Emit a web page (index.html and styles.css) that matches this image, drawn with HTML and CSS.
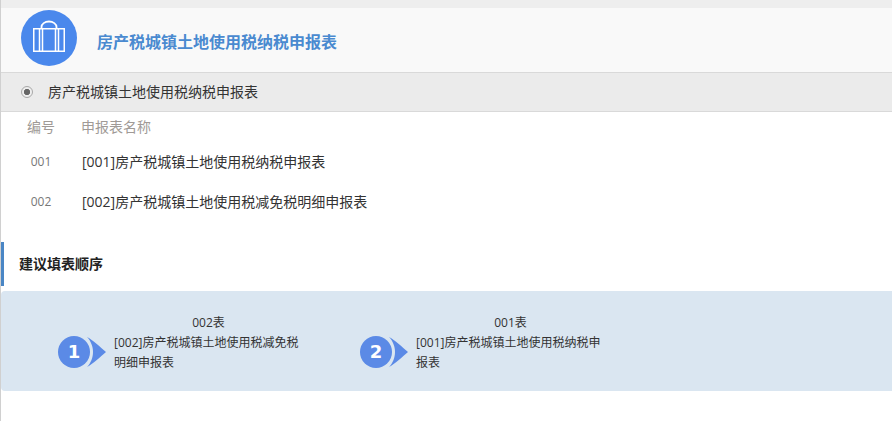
FILE: index.html
```html
<!DOCTYPE html>
<html lang="zh">
<head>
<meta charset="utf-8">
<title>房产税城镇土地使用税纳税申报表</title>
<link rel="stylesheet" href="styles.css">
</head>
<body>
<div class="page">
  <header class="head">
    <span class="logo">
      <svg width="56" height="56" viewBox="0 0 56 56"><circle cx="28" cy="28" r="28" fill="#4a88ec"/><g fill="none" stroke="#fff" stroke-width="1.5"><rect x="12.750" y="18.750" width="30.500" height="22.500"/><path d="M18.500 41V19M21.500 41V19M34.500 41V19M37.500 41V19"/><path d="M20.500 18.500V17a7.500 5.500 0 0 1 15 0V18.500" stroke-width="1.800"/></g></svg>
    </span>
    <h1 class="title">房产税城镇土地使用税纳税申报表</h1>
  </header>
  <div class="choice">
    <span class="radio"></span>
    <span class="choice-label">房产税城镇土地使用税纳税申报表</span>
  </div>
  <table class="forms">
    <thead><tr><th class="num">编号</th><th>申报表名称</th></tr></thead>
    <tbody>
      <tr><td class="num">001</td><td class="name">[001]房产税城镇土地使用税纳税申报表</td></tr>
      <tr><td class="num">002</td><td class="name">[002]房产税城镇土地使用税减免税明细申报表</td></tr>
    </tbody>
  </table>
  <h2 class="section">建议填表顺序</h2>
  <div class="panel">
    <div class="step">
      <span class="badge">
        <svg width="50" height="32" viewBox="0 0 50 32"><path d="M29 1C33 5 35 11 35 16C35 21 33 27 29 31C35 28 42 21 48 16C42 11 35 4 29 1Z" fill="#5b8ae6"/></svg>
        <span class="badge-num">1</span>
      </span>
      <div class="step-text"><div class="step-title">002表</div><div>[002]房产税城镇土地使用税减免税明细申报表</div></div>
    </div>
    <div class="step">
      <span class="badge">
        <svg width="50" height="32" viewBox="0 0 50 32"><path d="M29 1C33 5 35 11 35 16C35 21 33 27 29 31C35 28 42 21 48 16C42 11 35 4 29 1Z" fill="#5b8ae6"/></svg>
        <span class="badge-num">2</span>
      </span>
      <div class="step-text"><div class="step-title">001表</div><div>[001]房产税城镇土地使用税纳税申报表</div></div>
    </div>
  </div>
</div>
</body>
</html>
```
FILE: styles.css
```css
* { box-sizing: border-box; }
html, body { margin: 0; padding: 0; background: #fff; }
body { font-family: "Open Sans", "Noto Sans CJK SC", sans-serif; color: #333; overflow: hidden; }
.page { height: 421px; border-left: 1px solid #d0d0d0; padding-top: 8px; background: linear-gradient(#eee 8px, #fff 8px); overflow: hidden; }
.head { height: 65px; background: #f9f9f9; border-bottom: 1px solid #d9d9d9; display: flex; padding: 2px 0 0 20px; }
.logo { width: 56px; height: 56px; display: block; }
.logo svg { display: block; }
.title { margin: 20px 0 0 20px; font-size: 16px; line-height: 24px; font-weight: 700; color: #4a8ad0; }
.choice { height: 39px; background: #ebebeb; border-bottom: 1px solid #d9d9d9; display: flex; align-items: center; padding-left: 20px; font-size: 14px; color: #333; }
.radio { width: 12px; height: 12px; border-radius: 50%; border: 1px solid #a8a8a8; background: radial-gradient(circle, #666 0 2.800px, #eee 3.500px); }
.choice-label { margin-left: 15px; line-height: 20px; }
.forms { border-collapse: collapse; font-size: 14px; margin-bottom: 21px; }
.forms th { font-weight: 400; color: #a09a96; text-align: left; height: 29px; padding: 0; line-height: 29px; }
.forms td { height: 40px; padding: 0; color: #333; }
.forms td.name { padding-left: 1px; }
.forms .num { width: 80px; text-align: center; }
.forms td.num { font-size: 12px; color: #777; }
.section { margin: 0; height: 44px; border-left: 3px solid #4a86c5; padding-left: 15px; font-size: 14px; line-height: 44px; font-weight: 700; color: #222; }
.panel { height: 100px; margin-top: 5px; background: #dae6f1; border-radius: 4px 0 0 4px; display: flex; padding: 22px 0 0 57px; font-size: 12px; line-height: 20px; color: #333; }
.step { width: 302px; display: flex; }
.badge { position: relative; width: 56px; height: 32px; margin-top: 23px; flex: none; }
.badge::before { content: ""; position: absolute; left: 0; top: 0; width: 32px; height: 32px; border-radius: 50%; background: #5b8ae6; }
.badge svg { position: absolute; left: 0; top: 0; }
.badge-num { position: absolute; left: 0; top: 0; width: 32px; line-height: 32px; text-align: center; color: #fff; font-family: "DejaVu Sans", sans-serif; font-size: 18px; font-weight: 700; }
.step-text { width: 189px; }
.step-title { text-align: center; }
```
